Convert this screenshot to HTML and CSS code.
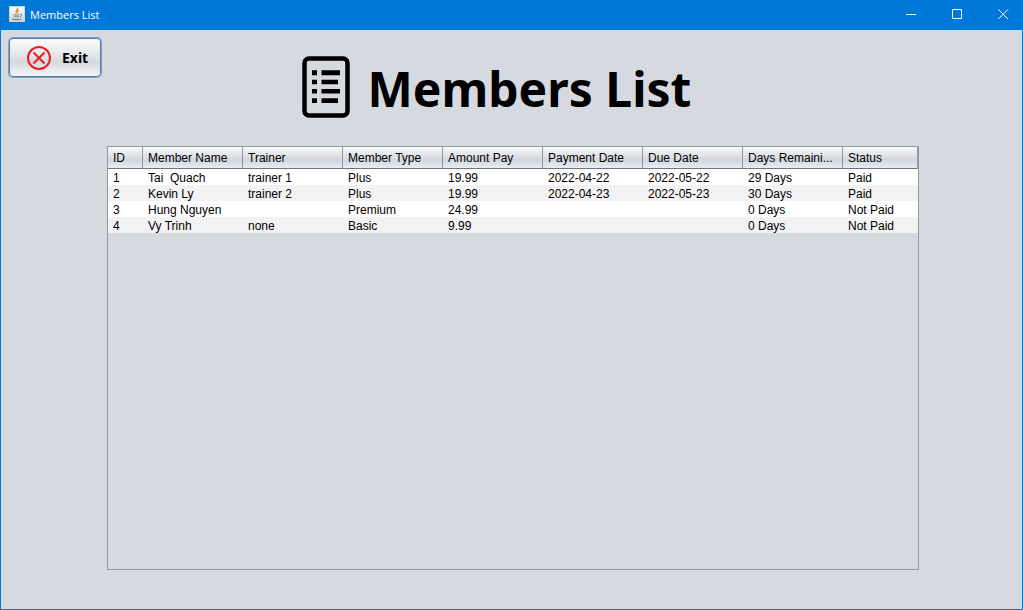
FILE: index.html
```html
<!DOCTYPE html>
<html lang="en">
<head>
<meta charset="utf-8">
<title>Members List</title>
<link rel="stylesheet" href="styles.css">
</head>
<body>
<div class="window">
  <header class="titlebar">
    <svg class="app-icon" viewBox="0 0 16 16" aria-hidden="true">
      <defs><linearGradient id="ig" x1="0" y1="0" x2="0" y2="1"><stop offset="0" stop-color="#fff"/><stop offset="1" stop-color="#cfcfcb"/></linearGradient></defs>
      <rect x=".5" y=".5" width="15" height="15" fill="url(#ig)" stroke="#d2d2ce"/>
      <path d="M8.600 1.500c1 2-3 3-1.200 5.500M10 4.200C8 5.200 7.700 6 8.500 7.300" fill="none" stroke="#e08a3a" stroke-width="1.300"/>
      <path d="M4.500 8.500c1 .8 5 .8 6 0M5.300 10.500c1 .6 3.500 .6 4.700 0M3 12.800c2 1.200 7.500 1.200 9.500 0M11.300 8.300c2.300-.5 2 1.800-.3 2.500" fill="none" stroke="#5a7b9e" stroke-width="1"/>
    </svg>
    <span class="titlebar-text">Members List</span>
    <div class="window-controls">
      <button class="control" type="button" aria-label="Minimize"><svg viewBox="0 0 11 11"><path d="M0 5.500h10"/></svg></button>
      <button class="control" type="button" aria-label="Maximize"><svg viewBox="0 0 11 11"><path d="M.5.5h9v9h-9z"/></svg></button>
      <button class="control" type="button" aria-label="Close"><svg viewBox="0 0 11 11"><path d="M.5.5l9.500 9.500M10 .5L.5 10"/></svg></button>
    </div>
  </header>
  <main class="content">
    <div class="heading-row">
      <button class="exit" type="button">
        <svg class="exit-icon" viewBox="0 0 24 24" aria-hidden="true"><circle cx="12" cy="12" r="11"/><path d="M6.500 6.500l11 11M17.500 6.500l-11 11"/></svg>
        Exit
      </button>
      <div class="heading">
        <svg class="list-icon" viewBox="0 0 48 62" aria-hidden="true">
          <rect x="2.500" y="2.500" width="43" height="57" rx="4.500" fill="none" stroke="#000" stroke-width="4.500"/>
          <path d="M10 14.300h5v5h-5zM19.500 14.300h18.500v5H19.500zM10 23.700h5v4.600h-5zM19.500 23.700h16.500v4.600H19.500zM10 33h5v4.600h-5zM19.500 33h18.500v4.600H19.500zM10 42.300h5v4.600h-5zM19.500 42.300h16.500v4.600H19.500z"/>
        </svg>
        <h1 class="title">Members List</h1>
      </div>
    </div>
    <div class="table-pane">
      <table class="members">
        <colgroup><col class="col-id"><col class="col"><col class="col"><col class="col"><col class="col"><col class="col"><col class="col"><col class="col"><col class="col-status"></colgroup>
        <thead>
          <tr><th>ID</th><th>Member Name</th><th>Trainer</th><th>Member Type</th><th>Amount Pay</th><th>Payment Date</th><th>Due Date</th><th>Days Remaini...</th><th>Status</th></tr>
        </thead>
        <tbody>
          <tr><td>1</td><td>Tai  Quach</td><td>trainer 1</td><td>Plus</td><td>19.99</td><td>2022-04-22</td><td>2022-05-22</td><td>29 Days</td><td>Paid</td></tr>
          <tr><td>2</td><td>Kevin Ly</td><td>trainer 2</td><td>Plus</td><td>19.99</td><td>2022-04-23</td><td>2022-05-23</td><td>30 Days</td><td>Paid</td></tr>
          <tr><td>3</td><td>Hung Nguyen</td><td></td><td>Premium</td><td>24.99</td><td></td><td></td><td>0 Days</td><td>Not Paid</td></tr>
          <tr><td>4</td><td>Vy Trinh</td><td>none</td><td>Basic</td><td>9.99</td><td></td><td></td><td>0 Days</td><td>Not Paid</td></tr>
        </tbody>
      </table>
    </div>
  </main>
</div>
</body>
</html>
```
FILE: styles.css
```css
* { box-sizing: border-box; }
body { margin: 0; font-family: "Liberation Sans", Arial, sans-serif; font-size: 12px; color: #000; }
.window {
  display: flex;
  flex-direction: column;
  min-height: 100vh;
  background: #d6d9df;
  border: 1px solid #0078d7;
  border-top: 0;
}
.titlebar {
  display: flex;
  align-items: center;
  height: 30px;
  padding-left: 8px;
  background: #0078d7;
  color: #fff;
}
.app-icon { width: 16px; height: 16px; margin: 0 5px 2px 0; }
.titlebar-text { font-family: "Open Sans", sans-serif; font-size: 11px; line-height: 30px; }
.window-controls { display: flex; gap: 8px; height: 28px; margin-left: auto; align-self: flex-start; }
.control {
  display: flex;
  align-items: center;
  justify-content: center;
  width: 38px;
  padding: 0;
  border: 0;
  background: none;
}
.control svg { width: 11px; height: 11px; fill: none; stroke: #fff; stroke-width: 1; }
.content { display: flex; flex: 1; flex-direction: column; padding: 8px 8px 39px; }
.heading-row { display: grid; grid-template-columns: 1fr auto 1fr; align-items: start; }
.exit {
  display: flex;
  align-items: center;
  justify-self: start;
  gap: 11px;
  height: 39px;
  padding: 0 12px 0 17px;
  border: 1px solid #5f7b99;
  border-radius: 4px;
  box-shadow: 0 0 0 1px #79a3cb;
  background: linear-gradient(#fafafb, #e3e5e9 45%, #d5d8de 60%, #f4f5f8);
  color: #000;
  font: bold 14px/20px "Noto Sans", Tahoma, sans-serif;
}
.exit-icon { width: 24px; height: 24px; fill: none; stroke: #ed1c24; stroke-width: 2; }
.heading { display: flex; align-items: center; gap: 18px; padding: 18px 30px 0 0; }
.list-icon { width: 48px; height: 62px; }
.title { margin: 0; padding-top: 4px; font: bold 48px/58px "Noto Sans", Tahoma, sans-serif; }
.table-pane { flex: 1; margin: 28px 95px 0 98px; border: 1px solid #9297a1; }
.members { width: 100%; table-layout: fixed; border-collapse: separate; border-spacing: 0; }
.col-id { width: 35px; }
.col { width: 100px; }
.col-status { width: 75px; }
.members th, .members td { overflow: hidden; padding: 0 0 0 5px; text-align: left; white-space: pre; }
.members th {
  height: 22px;
  border-right: 1px solid #9297a1;
  border-bottom: 1px solid #70747f;
  background: linear-gradient(#f6f7f9, #dfe1e6 45%, #d3d6dc 60%, #e9ecf2);
  font-weight: normal;
  line-height: 20px;
}
.members td { height: 16px; padding-top: 2px; background: #fff; line-height: 14px; }
.members tbody tr:nth-child(even) td { background: #f2f2f2; }
```
